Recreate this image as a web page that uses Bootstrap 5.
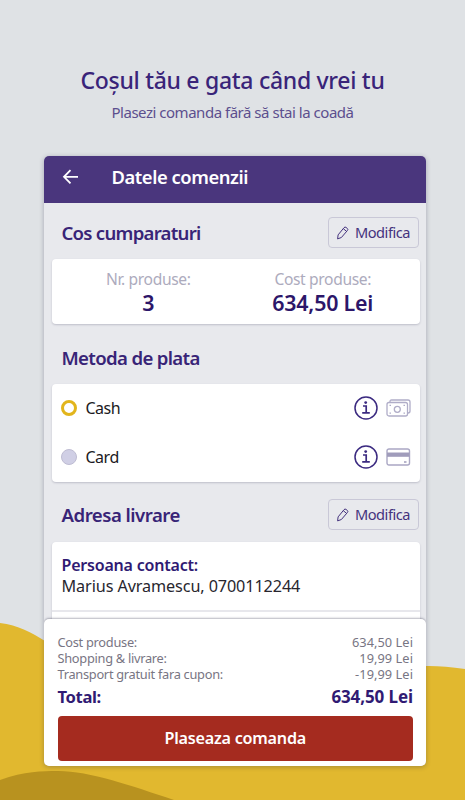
<!DOCTYPE html>
<html lang="ro">
<head>
<meta charset="utf-8">
<meta name="viewport" content="width=device-width, initial-scale=1">
<title>Datele comenzii</title>
<link href="https://cdn.jsdelivr.net/npm/bootstrap@5.3.0/dist/css/bootstrap.min.css" rel="stylesheet">
<style>
  body { font-family: "Noto Sans", "Open Sans", sans-serif; background: #dfe2e5; color: #2e1a6e; width: 465px; height: 800px; white-space: nowrap; }
  .waves { left: 0; top: 0; z-index: 0; }
  .stage { height: 800px; z-index: 1; }
  .hero { height: 156px; padding-top: 64px; }
  .hero h1 { font-size: 23px; line-height: 32px; font-weight: 500; letter-spacing: -.29px; color: #392479; }
  .hero p { font-size: 15px; line-height: 20px; font-weight: 400; letter-spacing: -.48px; color: #5c4f8e; margin-top: 6px; }
  .phone { width: 382px; height: 610px; margin-left: 5px; background: #e8e9ed; border-radius: 5px; box-shadow: 0 1px 5px rgba(40,45,70,.32); }
  .topbar { height: 46.5px; background: #4a367d; padding-left: 18px; padding-bottom: 4px; }
  .topbar h2 { font-size: 18.4px; font-weight: 600; letter-spacing: -.45px; margin-left: 32.5px; line-height: 24px; }
  .content { height: 416px; padding: 0 6.5px 0 7.5px; }
  .sect { padding: 0 1px 0 10px; }
  .sect h3 { font-size: 18.6px; line-height: 24px; font-weight: 600; letter-spacing: -.75px; color: #382477; }
  .s1 { height: 56.5px; padding-top: 4px; }
  .s2 { height: 60.5px; padding-top: 8px; }
  .s2 h3 { letter-spacing: -.66px; }
  .s3 { height: 60px; padding-top: 6px; }
  .s3 h3 { letter-spacing: -.5px; }
  .edit { width: 91px; height: 31px; border: 1px solid #c9c8d7; border-radius: 4px; color: #44327d; font-size: 14.6px; letter-spacing: -.45px; gap: 5px; }
  .edit:hover { border-color: #4a367d; }
  .panel { background: #fff; border-radius: 4px; box-shadow: 0 1px 2px rgba(60,60,90,.24); }
  .stats { height: 64.5px; padding: 9.5px 9.5px 0; }
  .stats small { display: block; font-size: 15.6px; line-height: 21px; letter-spacing: -.35px; color: #adabbd; font-weight: 400; }
  .stats b { display: block; font-size: 21.4px; line-height: 25px; font-weight: 600; letter-spacing: -.2px; color: #2c1669; }
  .pay { height: 97.5px; padding-left: 9px; padding-right: 8.5px; }
  .pay label { height: 48.5px; }
  .pay label > span { font-size: 16px; letter-spacing: -.5px; color: #1c1a22; margin-left: 9px; }
  .dot { width: 16px; height: 16px; border-radius: 50%; background: #d0cfe5; border: 1px solid #bebcd2; }
  .dot.on { border: 3px solid #e2b51c; background: #fff; }
  .addr { height: 90px; border-radius: 4px 4px 0 0; }
  .addr-in { height: 70.5px; padding: 13px 10px 0; border-bottom: 2px solid #e7e7ec; line-height: 21px; font-size: 16.2px; color: #28262e; letter-spacing: -.1px; }
  .addr-in strong { display: block; font-weight: 600; letter-spacing: -.2px; color: #301a73; font-size: 16px; }
  .sheet { height: 147.5px; padding: 15.5px 13px 5px 13.5px; border-radius: 5px; background: #fff; box-shadow: 0 -1px 2px rgba(50,50,75,.35); position: relative; }
  .line { font-size: 12.8px; line-height: 16px; color: #787583; font-weight: 400; letter-spacing: -.28px; }
  .line span + span { letter-spacing: .05px; }
  .total { font-size: 16.6px; line-height: 22px; font-weight: 700; letter-spacing: -.35px; color: #301a73; margin-top: 4px; }
  .total span + span { font-size: 17px; letter-spacing: -.1px; }
  .order { height: 45px; margin-top: 7.5px; background: #a52b1f; color: #fff; border-radius: 4px; font-size: 16.2px; font-weight: 600; letter-spacing: -.25px; }
  .order:hover { background: #8f2419; color: #fff; }
</style>
</head>
<body class="position-relative overflow-hidden">
<svg class="waves position-absolute" width="465" height="800" aria-hidden="true">
  <path d="M0 623C18 625 32 633 45 641L100 690H350C390 667 415 662 465 669V800H0Z" fill="#e1b82f"/>
  <path d="M0 780C25 771 42 771 58 771C90 771 132 786 174 800H0Z" fill="#b8921f"/>
</svg>
<svg class="d-none">
  <symbol id="pencil" viewBox="0 0 14 14"><path d="M1.6 12.900l.5-4L8 1.700a1.500 1.500 0 0 1 2.200-.2l1 .8a1.500 1.500 0 0 1 .2 2.200L5.400 11.500zM7.300 2.700l3.200 2.600" fill="none" stroke="currentColor" stroke-width="1" stroke-linejoin="round"/></symbol>
  <symbol id="info" viewBox="0 0 24 24"><circle cx="12" cy="12" r="11" fill="none" stroke="#3b2a80" stroke-width="1.5"/><circle cx="11.7" cy="6.600" r="1.400" fill="#3b2a80"/><path d="M9 10h3.200v6.600M8.200 16.900h7.600" fill="none" stroke="#3b2a80" stroke-width="1.700"/></symbol>
</svg>

<div class="stage position-relative d-flex flex-column align-items-center">
  <header class="hero text-center">
    <h1 class="mb-0">Coșul tău e gata când vrei tu</h1>
    <p class="mb-0">Plasezi comanda fără să stai la coadă</p>
  </header>

  <main class="phone overflow-hidden">
    <nav class="topbar d-flex align-items-center text-white">
      <svg width="17" height="16" viewBox="0 0 17 16"><path d="M16 7.800H2M8.500 1.200L2 7.800l6.500 6.600" fill="none" stroke="#fff" stroke-width="1.800"/></svg>
      <h2 class="mb-0">Datele comenzii</h2>
    </nav>

    <div class="content">
      <div class="sect s1 d-flex align-items-center justify-content-between">
        <h3 class="mb-0">Cos cumparaturi</h3>
        <button class="btn edit p-0 d-flex align-items-center justify-content-center"><svg width="14" height="14"><use href="#pencil"/></svg>Modifica</button>
      </div>
      <div class="panel stats row g-0 text-center">
        <div class="col-6"><small>Nr. produse:</small><b>3</b></div>
        <div class="col-6"><small>Cost produse:</small><b>634,50 Lei</b></div>
      </div>

      <div class="sect s2 d-flex align-items-center">
        <h3 class="mb-0">Metoda de plata</h3>
      </div>
      <div class="panel pay">
        <label class="d-flex align-items-center"><i class="dot on"></i><span>Cash</span>
          <svg class="ms-auto me-2" width="24" height="24"><use href="#info"/></svg>
          <svg width="25" height="18" viewBox="0 0 25 18" fill="none" stroke="#b0adc8" stroke-width="1.300"><path d="M4 3V2.600C4 1.500 4.500 1 5.500 1H22C23.400 1 24 1.600 24 3V12C24 13.300 23.300 14 22 14"/><rect x="1" y="3.500" width="20.500" height="13.500" rx="2"/><circle cx="11.300" cy="10.300" r="3"/><path d="M3.500 6.300h1.500M17.500 6.300h1.500M3.500 14.200h1.500M17.500 14.200h1.500"/></svg>
        </label>
        <label class="d-flex align-items-center"><i class="dot"></i><span>Card</span>
          <svg class="ms-auto me-2" width="24" height="24"><use href="#info"/></svg>
          <svg width="25" height="18" viewBox="0 0 25 18"><rect x="1" y="1" width="22.500" height="16" rx="2" fill="none" stroke="#aaa7c4" stroke-width="1.400"/><path d="M1 4.500H23.500V8.800H1z" fill="#a09cbb"/><path d="M18 14h2.500" stroke="#a09cbb" stroke-width="1.500"/></svg>
        </label>
      </div>

      <div class="sect s3 d-flex align-items-center justify-content-between">
        <h3 class="mb-0">Adresa livrare</h3>
        <button class="btn edit p-0 d-flex align-items-center justify-content-center"><svg width="14" height="14"><use href="#pencil"/></svg>Modifica</button>
      </div>
      <div class="panel addr">
        <div class="addr-in"><strong>Persoana contact:</strong>Marius Avramescu, 0700112244</div>
      </div>
    </div>

    <footer class="sheet">
      <div class="line d-flex justify-content-between"><span>Cost produse:</span><span>634,50 Lei</span></div>
      <div class="line d-flex justify-content-between"><span>Shopping &amp; livrare:</span><span>19,99 Lei</span></div>
      <div class="line d-flex justify-content-between"><span>Transport gratuit fara cupon:</span><span>-19,99 Lei</span></div>
      <div class="total d-flex justify-content-between"><span>Total:</span><span>634,50 Lei</span></div>
      <button class="btn order w-100 p-0">Plaseaza comanda</button>
    </footer>
  </main>
</div>
<script src="https://cdn.jsdelivr.net/npm/bootstrap@5.3.0/dist/js/bootstrap.bundle.min.js"></script>
</body>
</html>
